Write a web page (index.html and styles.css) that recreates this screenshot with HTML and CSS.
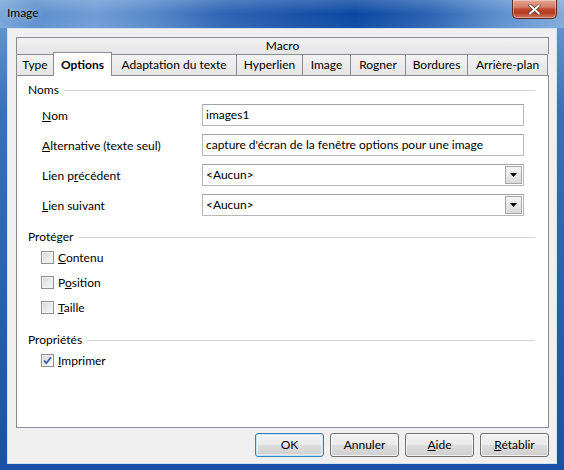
FILE: index.html
```html
<!DOCTYPE html>
<html lang="fr">
<head>
<meta charset="utf-8">
<title>Image</title>
<link rel="stylesheet" href="styles.css">
</head>
<body>
<div class="window">
  <div class="titlebar">
    <span class="title">Image</span>
    <div class="close">
      <svg width="13" height="11" viewBox="0 0 13 11"><path d="M2 1.5 L11 9.5 M11 1.5 L2 9.5" stroke="#4a2a24" stroke-width="3.2" stroke-linecap="square"/><path d="M2 1.5 L11 9.5 M11 1.5 L2 9.5" stroke="#fff" stroke-width="2" stroke-linecap="square"/></svg>
    </div>
  </div>
  <div class="client">
    <div class="tabctl">
      <div class="row-back"><div class="tab-macro">Macro</div></div>
      <div class="row-front">
        <div class="tab">Type</div>
        <div class="tab active">Options</div>
        <div class="tab">Adaptation du texte</div>
        <div class="tab">Hyperlien</div>
        <div class="tab">Image</div>
        <div class="tab">Rogner</div>
        <div class="tab">Bordures</div>
        <div class="tab">Arrière-plan</div>
      </div>
      <div class="panel">
        <div class="legend">Noms</div>
        <div class="fields">
          <div class="label"><u>N</u>om</div>
          <div class="input">images1</div>
          <div class="label"><u>A</u>lternative (texte seul)</div>
          <div class="input">capture d'écran de la fenêtre options pour une image</div>
          <div class="label">Lien p<u>r</u>écédent</div>
          <div class="input select"><span>&lt;Aucun&gt;</span><span class="drop"><svg width="7" height="4" viewBox="0 0 7 4"><path d="M0 0 H7 L3.5 4 Z" fill="#000"/></svg></span></div>
          <div class="label"><u>L</u>ien suivant</div>
          <div class="input select"><span>&lt;Aucun&gt;</span><span class="drop"><svg width="7" height="4" viewBox="0 0 7 4"><path d="M0 0 H7 L3.5 4 Z" fill="#000"/></svg></span></div>
        </div>
        <div class="legend legend-gap">Protéger</div>
        <div class="checks">
          <div class="check"><span class="box"></span><span><u>C</u>ontenu</span></div>
          <div class="check"><span class="box"></span><span>P<u>o</u>sition</span></div>
          <div class="check"><span class="box"></span><span><u>T</u>aille</span></div>
        </div>
        <div class="legend legend-gap2">Propriétés</div>
        <div class="checks">
          <div class="check"><span class="box"><svg width="11" height="11" viewBox="0 0 11 11"><path d="M2 5.5 L4.3 8.2 L9 2.2" fill="none" stroke="#3d5ca8" stroke-width="1.8"/></svg></span><span><u>I</u>mprimer</span></div>
        </div>
      </div>
    </div>
    <div class="buttons">
      <div class="btn default">OK</div>
      <div class="btn">Annuler</div>
      <div class="btn"><u>A</u>ide</div>
      <div class="btn"><u>R</u>établir</div>
    </div>
  </div>
</div>
</body>
</html>
```
FILE: styles.css
```css
* { box-sizing: border-box; }
html, body { margin: 0; padding: 0; }
body {
  width: 564px;
  height: 470px;
  overflow: hidden;
  font-family: Lato, "Noto Sans", sans-serif;
  font-size: 12px;
  color: #000;
}
.window {
  width: 564px;
  height: 470px;
  display: flex;
  flex-direction: column;
  background: linear-gradient(180deg, #6d9dd5 0px, #3a6fbd 110px, #2660b2 300px, #1a50a6 470px);
}
.titlebar {
  position: relative;
  height: 28px;
  flex: none;
  padding-left: 7px;
  background:
    linear-gradient(180deg, rgba(255,255,255,0.18) 0px, rgba(255,255,255,0) 14px, rgba(255,255,255,0.05) 28px),
    linear-gradient(90deg, #78a6da 0%, #5b8ecd 6%, #6f9cd5 17%, #5587c9 27%, #2c63b4 40%, #1a53a9 52%, #0b47a2 63%, #2a63b3 76%, #5e90ce 89%, #80aadb 100%);
}
.title {
  display: block;
  line-height: 25px;
  font-size: 12px;
  text-shadow: 0 0 6px rgba(255,255,255,0.7);
}
.close {
  position: absolute;
  top: 0;
  right: 7px;
  width: 45px;
  height: 19px;
  border: 1px solid #5d2a22;
  border-top: none;
  border-radius: 0 0 5px 5px;
  background: linear-gradient(180deg, #e4a494 0%, #d67c66 40%, #c04a2f 50%, #b73b21 70%, #d2765c 100%);
  box-shadow: inset 0 0 0 1px rgba(255,255,255,0.35);
  display: flex;
  align-items: center;
  justify-content: center;
}
.client {
  flex: 1;
  margin: 0 7px 6px 7px;
  border: 1px solid #d6e1ee;
  background: #f0f0f0;
  padding: 8px 7px 6px 8px;
  display: flex;
  flex-direction: column;
}
.tabctl {
  flex: 1;
  display: flex;
  flex-direction: column;
}
.row-back {
  height: 17px;
  display: flex;
}
.tab-macro {
  flex: 1;
  border: 1px solid #898c95;
  border-bottom: none;
  background: linear-gradient(180deg, #f3f3f3, #e4e4e4);
  text-align: center;
  line-height: 16px;
}
.row-front {
  height: 21px;
  display: grid;
  grid-template-columns: 37px 59px 124px 66px 48px 55px 62px 81px;
}
.tab {
  border: 1px solid #898c95;
  border-right: none;
  border-bottom: none;
  background: linear-gradient(180deg, #f3f3f3, #e4e4e4);
  text-align: center;
  line-height: 20px;
  white-space: nowrap;
}
.tab:last-child { border-right: 1px solid #898c95; }
.tab.active {
  position: relative;
  z-index: 1;
  height: 24px;
  margin-top: -2px;
  background: #fff;
  font-weight: bold;
  border-right: 1px solid #898c95;
  line-height: 23px;
}
.tab.active + .tab { border-left: none; }
.panel {
  flex: 1;
  border: 1px solid #898c95;
  background: #fff;
  padding: 6px 13px 0 11px;
}
.legend {
  display: flex;
  align-items: center;
  gap: 5px;
  height: 16px;
  line-height: 16px;
}
.legend::after {
  content: "";
  flex: 1;
  height: 1px;
  background: #d4d4d4;
}
.legend-gap { margin-top: 13px; }
.legend-gap2 { margin-top: 12px; }
.fields {
  display: grid;
  grid-template-columns: 160px 1fr;
  grid-auto-rows: 22px;
  row-gap: 8px;
  margin: 6px 11px 0 14px;
}
.label {
  display: flex;
  align-items: center;
  white-space: nowrap;
}
.input {
  border: 1px solid #b8b8b8;
  border-top-color: #a3a3a3;
  background: #fff;
  padding-left: 3px;
  line-height: 20px;
  white-space: nowrap;
  overflow: hidden;
}
.select {
  display: flex;
  justify-content: space-between;
  padding-right: 1px;
}
.drop {
  width: 17px;
  height: 18px;
  margin-top: 1px;
  border: 1px solid #a8a8a8;
  background: linear-gradient(180deg, #f4f4f4 0%, #e9e9e9 50%, #d8d8d8 100%);
  display: flex;
  align-items: center;
  justify-content: center;
}
.checks {
  margin-left: 13px;
}
.check {
  height: 25px;
  display: flex;
  align-items: center;
  gap: 4px;
}
.box {
  width: 13px;
  height: 13px;
  flex: none;
  border: 1px solid #8e8f8f;
  background: linear-gradient(135deg, #d2d4d8 0%, #e8e9eb 50%, #f8f8f8 100%);
  box-shadow: inset 0 0 0 1px #f4f4f4;
  display: flex;
  align-items: center;
  justify-content: center;
}
.box svg { display: block; }
.buttons {
  flex: none;
  display: flex;
  justify-content: flex-end;
  gap: 6px;
  margin-top: 5px;
}
.btn {
  width: 69px;
  height: 24px;
  border: 1px solid #707070;
  border-radius: 3px;
  background: linear-gradient(180deg, #f2f2f2 0%, #ebebeb 48%, #dddddd 52%, #cfcfcf 100%);
  box-shadow: inset 0 0 0 1px rgba(255,255,255,0.7);
  text-align: center;
  line-height: 22px;
}
.btn.default {
  border-color: #3c7fb1;
  box-shadow: inset 0 0 0 1px #bfe6fb, inset 0 0 0 2px rgba(255,255,255,0.5);
}
```
